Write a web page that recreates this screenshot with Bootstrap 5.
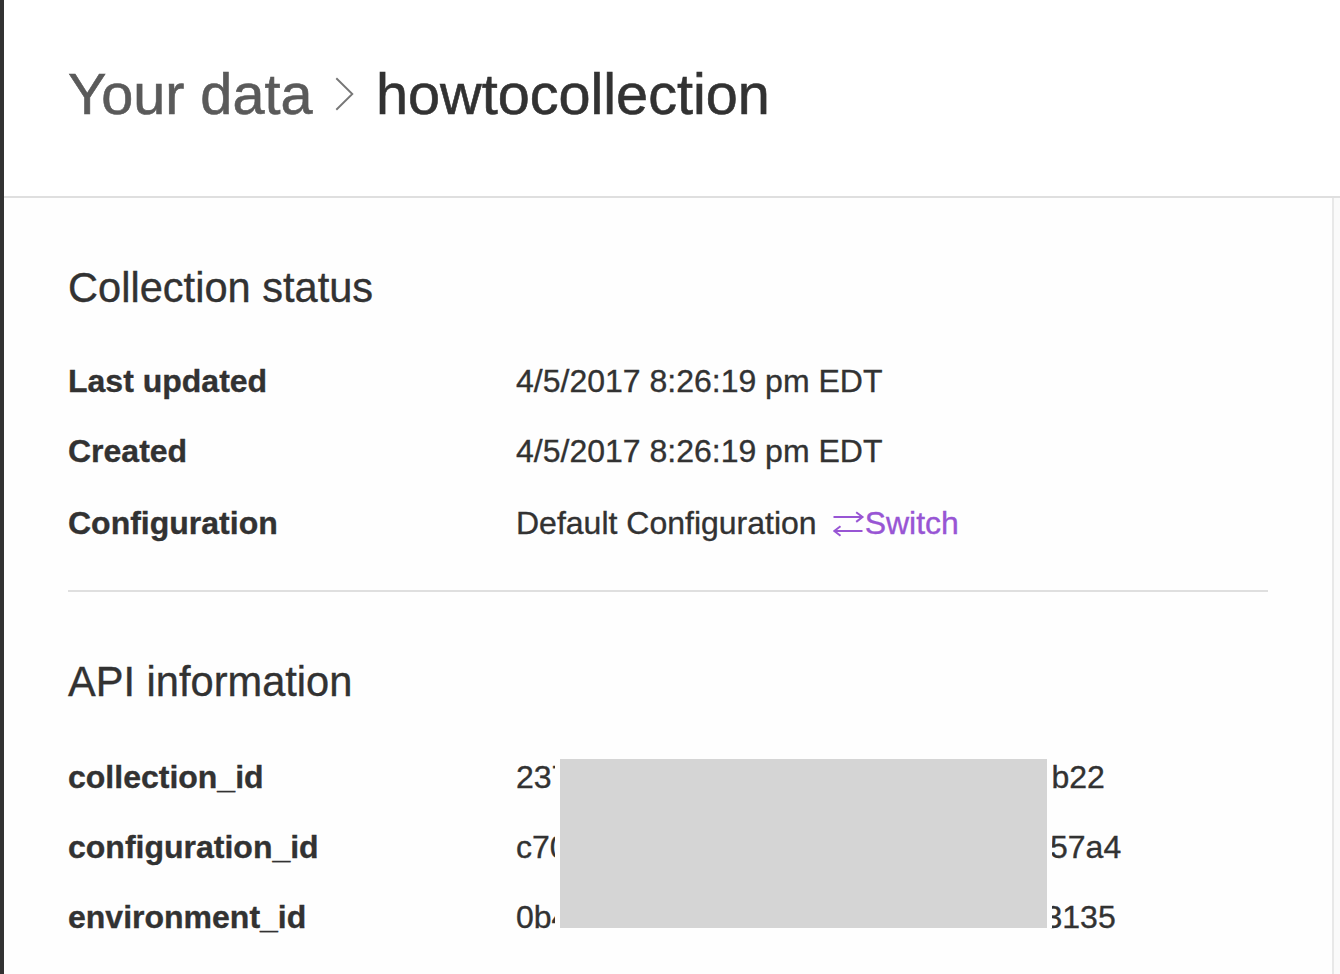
<!DOCTYPE html>
<html lang="en">
<head>
<meta charset="utf-8">
<meta name="viewport" content="width=device-width, initial-scale=1">
<title>howtocollection</title>
<link href="https://cdn.jsdelivr.net/npm/bootstrap@5.3.0/dist/css/bootstrap.min.css" rel="stylesheet">
<style>
body { font-family: "Liberation Sans", Arial, sans-serif; font-size: 32px; color: #323232; background: #fff; -webkit-text-stroke: .35px; }
.app { height: 974px; border-left: 4px solid #323232; }
.page-head { height: 198px; padding: 54px 64px 0; border-bottom: 2px solid #dfdfdf; }
.crumbs { font-size: 57.6px; line-height: 80px; font-weight: 400; white-space: nowrap; -webkit-text-stroke-width: .6px; }
.crumb-root { color: #5a5a5a; width: 267px; text-decoration: none; }
.crumb-sep { width: 20px; height: 36px; margin-bottom: 1px; }
.crumb-here { margin-left: 21px; }
.main-pane { padding: 60px 64px 0; background: #fefefe; }
.side-edge { width: 8px; border-left: 2px solid #e8e8e8; background: #fafafa; }
.section-title { font-size: 41.6px; line-height: 60px; font-weight: 400; }
.rule { height: 2px; background: #dfdfdf; margin: 30px 0 60px; }
.status-list { padding-top: 28px; }
.api-list { padding-top: 30px; }
.info-row { line-height: 70px; white-space: nowrap; }
.info-row.tall { line-height: 74px; }
.info-row dt { width: 448px; }
.switch-link { color: #9855d4; text-decoration: none; margin-left: 16px; }
.swap-icon { width: 32px; height: 26px; margin-top: 1px; }
.id-start { width: 39px; overflow: hidden; margin-right: 496.5px; }
.id-start.short { margin-right: 495px; }
.id-start.shorter { margin-right: 489.5px; }
.redaction { left: 487px; top: 47px; width: 497px; height: 169px; background: #d5d5d5; border: solid #fefefe; border-width: 0 5px; }
</style>
</head>
<body>
<div class="app d-flex flex-column overflow-hidden">
  <header class="page-head flex-shrink-0">
    <h1 class="crumbs d-flex align-items-center mb-0">
      <a class="crumb-root" href="#">Your data</a>
      <svg class="crumb-sep" viewBox="0 0 20 36" fill="none" stroke="#777" stroke-width="1.9"><path d="M1.300 2.300 17.300 18 1.300 33.700"/></svg>
      <span class="crumb-here">howtocollection</span>
    </h1>
  </header>
  <div class="d-flex flex-grow-1">
    <main class="main-pane flex-grow-1">
      <section>
        <h2 class="section-title mb-0">Collection status</h2>
        <dl class="status-list mb-0">
          <div class="info-row d-flex"><dt>Last updated</dt><dd class="mb-0">4/5/2017 8:26:19 pm EDT</dd></div>
          <div class="info-row d-flex"><dt>Created</dt><dd class="mb-0">4/5/2017 8:26:19 pm EDT</dd></div>
          <div class="info-row tall d-flex"><dt>Configuration</dt>
            <dd class="mb-0 d-flex">Default Configuration
              <a class="switch-link d-flex align-items-center" href="#"><svg class="swap-icon" viewBox="0 0 32 26" fill="none" stroke="#9855d4" stroke-width="2"><path d="M.5 6H29.500M23.200 1.300 29.500 6 23.200 10.900M29.500 20H1.500M7.500 15.200 1.200 20l6.300 4.800"/></svg>Switch</a>
            </dd>
          </div>
        </dl>
      </section>
      <div class="rule"></div>
      <section>
        <h2 class="section-title mb-0">API information</h2>
        <dl class="api-list mb-0 position-relative">
          <div class="info-row d-flex"><dt>collection_id</dt><dd class="d-flex mb-0"><span class="id-start">237</span><span>b22</span></dd></div>
          <div class="info-row d-flex"><dt>configuration_id</dt><dd class="d-flex mb-0"><span class="id-start short">c70</span><span>57a4</span></dd></div>
          <div class="info-row d-flex"><dt>environment_id</dt><dd class="d-flex mb-0"><span class="id-start shorter">0b4</span><span>3135</span></dd></div>
          <div class="redaction position-absolute"></div>
        </dl>
      </section>
    </main>
    <div class="side-edge"></div>
  </div>
</div>
<script src="https://cdn.jsdelivr.net/npm/bootstrap@5.3.0/dist/js/bootstrap.bundle.min.js"></script>
</body>
</html>
